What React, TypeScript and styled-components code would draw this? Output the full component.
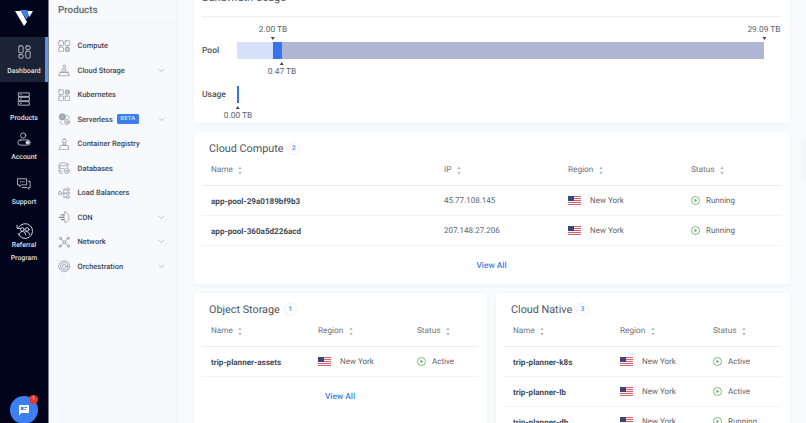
import React from "react";
import styled, { createGlobalStyle } from "styled-components";
import { ChevronDown } from "lucide-react";

const GlobalStyle = createGlobalStyle`
  html, body {
    margin: 0;
    padding: 0;
    height: 100%;
    overflow: hidden;
    background: #f9fafb;
    font-family: "Roboto", "Liberation Sans", sans-serif;
    text-rendering: geometricPrecision;
  }
`;

const Page = styled.div`
  display: flex;
  width: 806px;
  height: 423px;
  overflow: hidden;
  position: relative;
`;

const Rail = styled.aside`
  width: 48px;
  flex: none;
  background: #01041a;
  display: flex;
  flex-direction: column;
  position: relative;
  border-right: 1px solid #7d8290;
`;

const Logo = styled.div`
  height: 37px;
  display: flex;
  align-items: center;
  justify-content: center;
  padding-bottom: 1px;
  box-sizing: border-box;
`;

const RailItem = styled.div<{ $active?: boolean; $top?: number }>`
  display: flex;
  flex-direction: column;
  align-items: center;
  margin-top: ${(p) => p.$top ?? 0}px;
  padding: ${(p) => (p.$active ? "8px 0 4.5px 3px" : "0")};
  background: ${(p) => (p.$active ? "#1b2436" : "transparent")};
  border-right: ${(p) => (p.$active ? "3px solid #5f93ee" : "none")};
  color: #d9dce3;
`;

const RailLabel = styled.span<{ $tight?: boolean }>`
  font-size: 6.9px;
  line-height: 13px;
  font-weight: 500;
  text-align: center;
  margin-top: ${(p) => (p.$tight ? "-0.5px" : "5.5px")};
  color: #dfe2e8;
`;

const ChatButton = styled.div`
  position: absolute;
  left: 10px;
  top: 396px;
  width: 28px;
  height: 28px;
  border-radius: 50%;
  background: #3b7ff0;
  display: flex;
  align-items: center;
  justify-content: center;
`;

const ChatBadge = styled.span`
  position: absolute;
  top: -1px;
  right: 0;
  width: 9px;
  height: 9px;
  border-radius: 50%;
  background: #e5392f;
  color: #fff;
  font-size: 5px;
  line-height: 9px;
  text-align: center;
`;

const SubNav = styled.nav`
  width: 128px;
  flex: none;
  background: #f8f9fc;
  border-right: 1px solid #f1f2f5;
`;

const SubNavTitle = styled.div`
  height: 23px;
  padding: 4px 0 0 9px;
  box-sizing: border-box;
  font-size: 9.8px;
  line-height: 13px;
  font-weight: 500;
  color: #5e6672;
  border-bottom: 1px solid #f1f2f5;
`;

const SubNavList = styled.div`
  display: flex;
  flex-direction: column;
  padding-top: 10.5px;
`;

const SubNavRow = styled.div`
  height: 24.5px;
  display: flex;
  align-items: center;
  padding: 0 11px 0 8.5px;
  color: #868d9c;
`;

const SubNavText = styled.span`
  margin-left: 7.5px;
  font-size: 7.5px;
  font-weight: 500;
  color: #3f4756;
  white-space: nowrap;
`;

const BetaTag = styled.span`
  margin-left: 4px;
  background: #3b7ff0;
  color: #dbe6fb;
  font-size: 5.8px;
  font-weight: 500;
  line-height: 10px;
  padding: 0 3.5px;
  border-radius: 1.5px;
  letter-spacing: 0.2px;
`;

const Chevron = styled(ChevronDown)`
  margin-left: auto;
  color: #8d94a3;
`;

const Main = styled.main`
  flex: 1;
  min-width: 0;
  padding: 0 16px 0 16px;
  height: 423px;
  overflow: hidden;
`;

const Content = styled.div`
  margin-top: -19px;
  display: flex;
  flex-direction: column;
  gap: 9px;
`;

const Card = styled.section`
  background: #fff;
  border-radius: 4px;
  box-shadow: 0 1px 4px rgba(40, 50, 70, 0.05);
  padding: 0 9px 0 8px;
`;

const Columns = styled.div`
  display: grid;
  grid-template-columns: 293px 294px;
  gap: 9px;
`;

const UsageHead = styled.div`
  height: 36px;
  box-sizing: border-box;
  display: flex;
  align-items: flex-start;
  border-bottom: 1px solid #eef0f3;
  padding-top: 11px;
`;

const UsageTitle = styled.h2`
  margin: 0;
  width: 266px;
  font-size: 10.8px;
  line-height: 12px;
  font-weight: 400;
  color: #4d5560;
  white-space: nowrap;
`;

const Swatch = styled.i<{ $color: string; $gap: number }>`
  display: block;
  width: 8px;
  height: 8px;
  margin-right: ${(p) => p.$gap}px;
  background: ${(p) => p.$color};
`;

const Chart = styled.div`
  padding: 25px 17px 20px 0;
  display: flex;
  flex-direction: column;
  gap: 27px;
`;

const ChartRow = styled.div`
  display: flex;
  align-items: center;
  height: 17px;
`;

const ChartLabel = styled.span`
  width: 35px;
  flex: none;
  font-size: 8.5px;
  font-weight: 500;
  color: #4d5560;
`;

const Track = styled.div`
  flex: 1;
  height: 100%;
  display: flex;
  position: relative;
`;

const Segment = styled.div<{ $color: string; $width?: number }>`
  background: ${(p) => p.$color};
  ${(p) => (p.$width ? `width: ${p.$width}px;` : "flex: 1;")}
`;

const Marker = styled.div<{ $x: number; $below?: boolean }>`
  position: absolute;
  left: ${(p) => p.$x}px;
  ${(p) => (p.$below ? "top: 20px;" : "bottom: 19.5px;")}
  transform: translateX(-50%);
  display: flex;
  flex-direction: ${(p) => (p.$below ? "column" : "column-reverse")};
  align-items: center;
  font-size: 8.4px;
  line-height: 10px;
  color: #5c6470;
  white-space: nowrap;
`;

const Arrow = styled.i<{ $up?: boolean }>`
  display: block;
  width: 0;
  height: 0;
  border-left: 2px solid transparent;
  border-right: 2px solid transparent;
  ${(p) => (p.$up ? "border-bottom: 3px solid #3f4652;" : "border-top: 3px solid #3f4652;")}
  margin: ${(p) => (p.$up ? "0 0 1.5px" : "1.5px 0 0")};
`;

const TitleRow = styled.div`
  height: 26px;
  padding: 3px 0 0 7px;
  display: flex;
  align-items: center;
  gap: 4px;
`;

const Title = styled.h3`
  margin: 0;
  font-size: 10.8px;
  font-weight: 400;
  color: #4d5560;
  white-space: nowrap;
`;

const Count = styled.span`
  width: 13px;
  height: 13px;
  border-radius: 50%;
  border: 1px solid #eef0f4;
  box-sizing: border-box;
  color: #3b7ff0;
  font-size: 6.5px;
  font-weight: 500;
  line-height: 11px;
  text-align: center;
`;

const TableRow = styled.div<{ $cols: string; $head?: boolean }>`
  display: grid;
  grid-template-columns: ${(p) => p.$cols};
  height: ${(p) => (p.$head ? "25px" : "30px")};
  box-sizing: border-box;
  align-items: center;
  padding: ${(p) => (p.$head ? "0 0 6px 0" : "0")};
  border-bottom: 1px solid ${(p) => (p.$head ? "#e9ebef" : "#f2f3f5")};
`;

const Cell = styled.div`
  padding-left: 9px;
  display: flex;
  align-items: center;
  font-size: 8px;
  color: #5c6470;
  white-space: nowrap;
`;

const NameCell = styled(Cell)`
  font-size: 8.1px;
  font-weight: 700;
  color: #434b57;
`;

const HeadCell = styled(Cell)`
  font-size: 8.2px;
  color: #6b7280;
  gap: 5.5px;
`;

const StatusIcon = styled.svg`
  margin-right: 6px;
  flex: none;
`;

const FlagIcon = styled.svg`
  margin-right: 9px;
  flex: none;
`;

const ViewAll = styled.a`
  display: block;
  height: 38px;
  line-height: 40px;
  text-align: center;
  font-size: 8.4px;
  font-weight: 500;
  color: #3f7fe8;
`;

const EdgeTab = styled.div`
  position: absolute;
  right: -14px;
  top: 136px;
  width: 16px;
  height: 48px;
  border-radius: 8px;
  background: #f6f7f8;
  box-shadow: 0 0 8px rgba(30, 40, 60, 0.05);
`;

const Flag = () => (
  <FlagIcon width="13" height="9" viewBox="0 0 13 9">
    <rect width="13" height="9" fill="#f4f1f3" />
    <rect y="0" width="13" height="1" fill="#d9626f" />
    <rect y="2" width="13" height="1" fill="#d9626f" />
    <rect y="4" width="13" height="1" fill="#d9626f" />
    <rect y="6" width="13" height="1" fill="#d9626f" />
    <rect y="8" width="13" height="1" fill="#d9626f" />
    <rect width="6" height="5" fill="#3c4478" />
  </FlagIcon>
);

const Play = () => (
  <StatusIcon width="9" height="9" viewBox="0 0 18 18">
    <circle cx="9" cy="9" r="8" fill="none" stroke="#5fa860" strokeWidth="1.6" />
    <path d="M7 5.6 12.4 9 7 12.4z" fill="#5fa860" />
  </StatusIcon>
);

const Sort = () => (
  <svg width="4" height="9" viewBox="0 0 4 9">
    <path d="M2 0.5 3.6 3H.4z M2 8.5 .4 6h3.2z" fill="#aeb3bc" />
  </svg>
);

type IconProps = { children: React.ReactNode; size?: number };

const Glyph = ({ children, size = 14 }: IconProps) => (
  <svg width={size} height={size} viewBox="0 0 16 16" fill="none" stroke="currentColor" strokeWidth="0.9" strokeLinecap="round" strokeLinejoin="round" style={{ flex: "none" }}>
    {children}
  </svg>
);

const navIcons: Record<string, React.ReactNode> = {
  Compute: (
    <>
      <rect x="1" y="1" width="6" height="6" rx="1" />
      <rect x="9" y="1" width="6" height="6" rx="1" />
      <rect x="1" y="9" width="6" height="6" rx="1" />
      <rect x="9" y="9" width="6" height="6" rx="3" fill="#c3c8d2" />
    </>
  ),
  "Cloud Storage": (
    <>
      <circle cx="8" cy="3" r="1.6" />
      <rect x="6" y="6.5" width="4" height="3.5" />
      <path d="M1.5 15h13l-1.5-4H3zM3 11v-1M13 11v-1" />
    </>
  ),
  Kubernetes: (
    <>
      <rect x="1" y="1" width="6" height="6" rx="1" />
      <rect x="1" y="9" width="6" height="6" rx="1" />
      <rect x="9" y="9" width="6" height="6" rx="1" />
      <circle cx="12" cy="4" r="2.8" fill="#c3c8d2" />
    </>
  ),
  Serverless: (
    <>
      <circle cx="5.5" cy="5" r="4" fill="#a9afbc" />
      <circle cx="11.5" cy="11.5" r="3.2" />
      <circle cx="11.5" cy="11.5" r="1" />
      <path d="M11 2.5c2 .6 3 2 3.2 4M2.5 11c.5 2 1.5 3 3.5 3.5" />
    </>
  ),
  "Container Registry": (
    <>
      <rect x="5.5" y="1" width="5" height="5" rx="2.5" />
      <path d="M6.5 6v3h3V6" />
      <path d="M2 15h12l-1.5-5.5h-9z" />
    </>
  ),
  Databases: (
    <>
      <ellipse cx="7" cy="3" rx="5.5" ry="2" />
      <path d="M1.5 3v10c0 1 1.5 1.8 4 2M12.5 3v4M1.5 6.5c0 1 2 2 5.5 2M1.5 10c0 1 1.5 1.8 3.5 2" />
      <circle cx="11" cy="11.5" r="3.3" />
      <circle cx="11" cy="11.5" r="0.8" />
    </>
  ),
  "Load Balancers": (
    <>
      <rect x="1" y="6" width="3.5" height="4" rx="1" />
      <circle cx="12.5" cy="3" r="1.8" />
      <circle cx="12.5" cy="8" r="1.8" />
      <circle cx="12.5" cy="13" r="1.8" />
      <path d="M4.5 8h6M7.5 3v10M7.5 3h3M7.5 13h3" />
    </>
  ),
  CDN: (
    <>
      <path d="M9 1c3 1 5 4 5 7s-2 6-5 7c-1-2-1.5-4.5-1.5-7S8 3 9 1z" />
      <path d="M7.5 5H4M7.5 8H1.5M7.5 11H4" strokeWidth="1.6" />
    </>
  ),
  Network: (
    <>
      <circle cx="8" cy="8" r="1.8" />
      <circle cx="3" cy="3" r="1.5" />
      <circle cx="13" cy="3" r="1.5" />
      <circle cx="2.5" cy="13" r="1.5" />
      <circle cx="13.5" cy="13" r="1.5" />
      <path d="M4 4l2.7 2.7M12 4 9.3 6.7M3.6 12 6.7 9.3M12.4 12 9.3 9.3" />
    </>
  ),
  Orchestration: (
    <>
      <circle cx="8" cy="8" r="7" strokeDasharray="2 1" />
      <circle cx="8" cy="8" r="4.8" />
      <circle cx="8" cy="8" r="2.4" />
    </>
  ),
};

const navItems: { name: string; more?: boolean; beta?: boolean }[] = [
  { name: "Compute" },
  { name: "Cloud Storage", more: true },
  { name: "Kubernetes" },
  { name: "Serverless", more: true, beta: true },
  { name: "Container Registry" },
  { name: "Databases" },
  { name: "Load Balancers" },
  { name: "CDN", more: true },
  { name: "Network", more: true },
  { name: "Orchestration", more: true },
];

const computeCols = "233px 124px 123px 1fr";
const storageCols = "107px 99px 1fr";
const nativeCols = "107px 93px 1fr";

const Row = ({ cols, name, ip, status }: { cols: string; name: string; ip?: string; status: string }) => (
  <TableRow $cols={cols}>
    <NameCell>{name}</NameCell>
    {ip && <Cell>{ip}</Cell>}
    <Cell>
      <Flag />
      New York
    </Cell>
    <Cell>
      <Play />
      {status}
    </Cell>
  </TableRow>
);

const Head = ({ cols, labels }: { cols: string; labels: string[] }) => (
  <TableRow $cols={cols} $head>
    {labels.map((label) => (
      <HeadCell key={label}>
        {label}
        <Sort />
      </HeadCell>
    ))}
  </TableRow>
);

export default function App() {
  return (
    <Page>
      <GlobalStyle />
      <Rail>
        <Logo>
          <svg width="18" height="16" viewBox="0 0 18 16">
            <path d="M0 1h6l6 11-3 4z" fill="#fff" />
            <path d="M5 0h7l2.5 5-3 4.5z" fill="#3d7fe6" />
            <path d="M12.5 1H18l-3.6 6z" fill="#fff" />
          </svg>
        </Logo>
        <RailItem $active>
          <Glyph>
            <rect x="2" y="1" width="5" height="8" rx="1.2" />
            <rect x="2" y="11" width="5" height="4" rx="1.2" />
            <rect x="10" y="1" width="5" height="4" rx="1.2" />
            <rect x="10" y="7" width="5" height="8" rx="1.2" />
          </Glyph>
          <RailLabel>Dashboard</RailLabel>
        </RailItem>
        <RailItem $top={10}>
          <Glyph>
            <rect x="2" y="1" width="12" height="4" />
            <rect x="2" y="6" width="12" height="4" />
            <rect x="2" y="11" width="12" height="4" />
            <path d="M4 3h1M4 8h1M4 13h1" />
          </Glyph>
          <RailLabel>Products</RailLabel>
        </RailItem>
        <RailItem $top={7}>
          <Glyph>
            <circle cx="7" cy="4" r="3" />
            <rect x="1" y="9" width="14" height="6" rx="3" />
            <circle cx="12" cy="12" r="1.8" fill="currentColor" />
          </Glyph>
          <RailLabel>Account</RailLabel>
        </RailItem>
        <RailItem $top={12.5}>
          <Glyph>
            <path d="M1 2h10v7H5l-2 2V9H1z" />
            <path d="M13 5h2v7h-1.5v2l-2-2H6" />
            <path d="M4 5.5h.01M6 5.5h.01M8 5.5h.01" strokeWidth="1.3" />
          </Glyph>
          <RailLabel>Support</RailLabel>
        </RailItem>
        <RailItem $top={13}>
          <Glyph size={17}>
            <path d="M2.5 5A7 7 0 1 1 2 11" />
            <path d="M1 3v3h3" />
            <circle cx="6" cy="7" r="1.7" />
            <circle cx="10.5" cy="7" r="1.7" />
            <path d="M3 12c0-2 1.5-3 3-3s3 1 3 3M8 9.5c1-.8 4.5-1 5 2.5" />
          </Glyph>
          <RailLabel $tight>
            Referral
            <br />
            Program
          </RailLabel>
        </RailItem>
        <ChatButton>
          <svg width="12" height="12" viewBox="0 0 12 12">
            <path d="M1 1h10v8H3.5L1 11.5z" fill="#fff" />
            <path d="M3 3h2.5v3H3zM6.5 3H9v1H6.5zM6.5 5H8v1H6.5z" fill="#3b7ff0" />
          </svg>
          <ChatBadge>1</ChatBadge>
        </ChatButton>
      </Rail>
      <SubNav>
        <SubNavTitle>Products</SubNavTitle>
        <SubNavList>
          {navItems.map((item) => (
            <SubNavRow key={item.name}>
              <Glyph size={12.5}>{navIcons[item.name]}</Glyph>
              <SubNavText>{item.name}</SubNavText>
              {item.beta && <BetaTag>BETA</BetaTag>}
              {item.more && <Chevron size={9} strokeWidth={1.5} />}
            </SubNavRow>
          ))}
        </SubNavList>
      </SubNav>
      <Main>
        <Content>
          <Card>
            <UsageHead>
              <UsageTitle>Bandwidth Usage</UsageTitle>
              <Swatch $color="#d6e0f8" $gap={94} />
              <Swatch $color="#3e72d8" $gap={108} />
              <Swatch $color="#b1b6d2" $gap={0} />
            </UsageHead>
            <Chart>
              <ChartRow>
                <ChartLabel>Pool</ChartLabel>
                <Track>
                  <Segment $color="#d6e0f8" $width={36} />
                  <Segment $color="#3674ee" $width={9} />
                  <Segment $color="#b0b5d4" />
                  <Marker $x={36}>
                    <Arrow />
                    2.00 TB
                  </Marker>
                  <Marker $x={45} $below>
                    <Arrow $up />
                    0.47 TB
                  </Marker>
                  <Marker $x={527}>
                    <Arrow />
                    29.09 TB
                  </Marker>
                </Track>
              </ChartRow>
              <ChartRow>
                <ChartLabel>Usage</ChartLabel>
                <Track>
                  <Segment $color="#3674ee" $width={1.5} />
                  <Marker $x={1} $below>
                    <Arrow $up />
                    0.00 TB
                  </Marker>
                </Track>
              </ChartRow>
            </Chart>
          </Card>
          <Card>
            <TitleRow>
              <Title>Cloud Compute</Title>
              <Count>2</Count>
            </TitleRow>
            <Head cols={computeCols} labels={["Name", "IP", "Region", "Status"]} />
            <Row cols={computeCols} name="app-pool-29a0189bf9b3" ip="45.77.108.145" status="Running" />
            <Row cols={computeCols} name="app-pool-360a5d226acd" ip="207.148.27.206" status="Running" />
            <ViewAll>View All</ViewAll>
          </Card>
          <Columns>
            <Card>
              <TitleRow>
                <Title>Object Storage</Title>
                <Count>1</Count>
              </TitleRow>
              <Head cols={storageCols} labels={["Name", "Region", "Status"]} />
              <Row cols={storageCols} name="trip-planner-assets" status="Active" />
              <ViewAll>View All</ViewAll>
            </Card>
            <Card>
              <TitleRow>
                <Title>Cloud Native</Title>
                <Count>3</Count>
              </TitleRow>
              <Head cols={nativeCols} labels={["Name", "Region", "Status"]} />
              <Row cols={nativeCols} name="trip-planner-k8s" status="Active" />
              <Row cols={nativeCols} name="trip-planner-lb" status="Active" />
              <Row cols={nativeCols} name="trip-planner-db" status="Running" />
            </Card>
          </Columns>
        </Content>
      </Main>
      <EdgeTab />
    </Page>
  );
}
